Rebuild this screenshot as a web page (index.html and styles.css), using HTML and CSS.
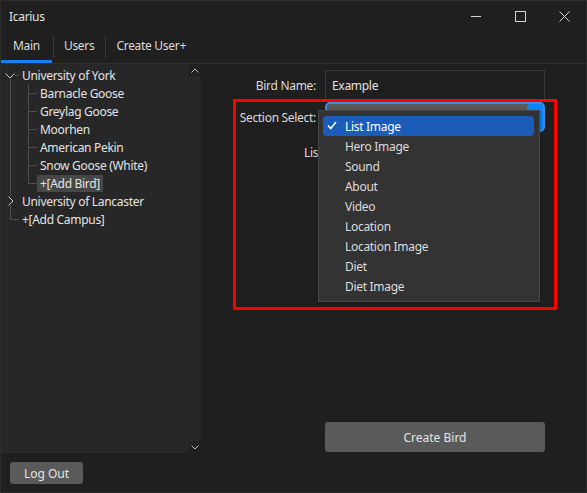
FILE: index.html
```html
<!DOCTYPE html>
<html lang="en">
<head>
<meta charset="utf-8">
<title>Icarius</title>
<link rel="stylesheet" href="styles.css">
</head>
<body>
<div class="window">
  <header class="titlebar">
    <span class="title">Icarius</span>
    <div class="controls">
      <span class="ctrl"><svg width="10" height="10" viewBox="0 0 10 10"><line x1="0" y1="4.5" x2="10" y2="4.5" stroke="#d6d6d6" stroke-width="1"/></svg></span>
      <span class="ctrl"><svg width="11" height="11" viewBox="0 0 11 11"><rect x="0.5" y="0.5" width="10" height="10" fill="none" stroke="#d6d6d6" stroke-width="1"/></svg></span>
      <span class="ctrl"><svg width="11" height="11" viewBox="0 0 11 11"><path d="M0.5 0.5 L10.5 10.5 M10.5 0.5 L0.5 10.5" stroke="#d6d6d6" stroke-width="1"/></svg></span>
    </div>
  </header>

  <nav class="tabs">
    <span class="tab active">Main</span>
    <span class="tab">Users</span>
    <span class="tab">Create User+</span>
  </nav>

  <main class="content">
    <section class="treepanel">
      <ul class="tree">
        <li class="row">
          <span class="cell twisty-open"><svg width="10" height="6" viewBox="0 0 10 6"><polyline points="0.5,0.5 5,5 9.5,0.5" fill="none" stroke="#cfcfcf" stroke-width="1"/></svg></span>
          <span class="label">University of York</span>
        </li>
        <li class="row"><span class="cell vline"></span><span class="cell tee"></span><span class="label">Barnacle Goose</span></li>
        <li class="row"><span class="cell vline"></span><span class="cell tee"></span><span class="label">Greylag Goose</span></li>
        <li class="row"><span class="cell vline"></span><span class="cell tee"></span><span class="label">Moorhen</span></li>
        <li class="row"><span class="cell vline"></span><span class="cell tee"></span><span class="label">American Pekin</span></li>
        <li class="row"><span class="cell vline"></span><span class="cell tee"></span><span class="label">Snow Goose (White)</span></li>
        <li class="row"><span class="cell vline"></span><span class="cell elbow"></span><span class="label selected">+[Add Bird]</span></li>
        <li class="row">
          <span class="cell vline twisty-closed"><svg width="6" height="10" viewBox="0 0 6 10"><polyline points="0.5,0.5 5,5 0.5,9.5" fill="none" stroke="#cfcfcf" stroke-width="1"/></svg></span>
          <span class="label">University of Lancaster</span>
        </li>
        <li class="row"><span class="cell elbow"></span><span class="label">+[Add Campus]</span></li>
      </ul>
      <div class="scrollbar">
        <span class="sbtn"><svg width="8" height="5" viewBox="0 0 8 5"><polyline points="0.5,4.5 4,1 7.5,4.5" fill="none" stroke="#bdbdbd" stroke-width="1"/></svg></span>
        <span class="strack"></span>
        <span class="sbtn"><svg width="8" height="5" viewBox="0 0 8 5"><polyline points="0.5,0.5 4,4 7.5,0.5" fill="none" stroke="#bdbdbd" stroke-width="1"/></svg></span>
      </div>
    </section>

    <section class="form">
      <div class="frow r1">
        <label class="flabel">Bird Name:</label>
        <div class="input">Example</div>
      </div>
      <div class="frow r2">
        <label class="flabel">Section Select:</label>
        <div class="combo">
          <span class="combo-btn"><svg width="8" height="5" viewBox="0 0 8 5"><polyline points="0.5,0.5 4,4 7.5,0.5" fill="none" stroke="#ffffff" stroke-width="1.2"/></svg></span>
        </div>
      </div>
      <div class="frow r3">
        <label class="flabel left">List Image:</label>
      </div>
      <button class="btn create">Create Bird</button>

      <div class="popup">
        <div class="item current"><svg class="check" width="10" height="9" viewBox="0 0 10 9"><polyline points="1,4.5 3.8,7.5 9,1" fill="none" stroke="#ffffff" stroke-width="1.6"/></svg>List Image</div>
        <div class="item">Hero Image</div>
        <div class="item">Sound</div>
        <div class="item">About</div>
        <div class="item">Video</div>
        <div class="item">Location</div>
        <div class="item">Location Image</div>
        <div class="item">Diet</div>
        <div class="item">Diet Image</div>
      </div>
      <div class="annotation"></div>
    </section>
  </main>

  <footer class="footer">
    <button class="btn logout">Log Out</button>
  </footer>
</div>
</body>
</html>
```

FILE: styles.css
```css
* { box-sizing: border-box; }

html, body {
  margin: 0;
  padding: 0;
  background: #1f1f1f;
}

body {
  font-family: "Noto Sans", "Open Sans", sans-serif;
  font-size: 12px;
  letter-spacing: -0.3px;
  color: #dedede;
}

.window {
  width: 587px;
  height: 493px;
  border: 1px solid #2c2c2c;
  display: flex;
  flex-direction: column;
  background: #1f1f1f;
  overflow: hidden;
}

/* title bar */
.titlebar {
  height: 31px;
  display: flex;
  align-items: center;
  flex: none;
}
.title {
  padding-left: 8px;
  color: #e2e2e2;
  flex: 1;
}
.controls {
  display: flex;
  height: 100%;
}
.ctrl {
  width: 44px;
  display: flex;
  align-items: center;
  justify-content: center;
}

/* tabs */
.tabs {
  height: 32px;
  display: flex;
  flex: none;
  border-bottom: 1px solid #2e2e2e;
}
.tab {
  display: flex;
  align-items: center;
  padding: 0 10px 1px 12px;
  color: #dcdcdc;
  border-bottom: 3px solid transparent;
}
.tab.active {
  padding-right: 12px;
}
.tab + .tab {
  border-left: 1px solid transparent;
  background: linear-gradient(#3a3a3a, #3a3a3a) no-repeat 0 4px / 1px 22px;
  padding-left: 11px;
}
.tab.active {
  border-bottom-color: #1282f3;
}

/* main content */
.content {
  flex: 1;
  display: flex;
  min-height: 0;
}

.treepanel {
  width: 200px;
  background: #272727;
  display: flex;
  flex: none;
}
.tree {
  list-style: none;
  margin: 0;
  padding: 2px 0 0;
  flex: 1;
}
.row {
  height: 18px;
  display: flex;
  align-items: center;
  color: #e4e4e4;
}
.cell {
  width: 18px;
  height: 18px;
  flex: none;
  display: flex;
  align-items: center;
  justify-content: center;
  --ln: #4e4e4e;
}
.vline {
  background: linear-gradient(var(--ln), var(--ln)) no-repeat 9px 0 / 1px 100%;
}
.tee {
  background:
    linear-gradient(var(--ln), var(--ln)) no-repeat 9px 0 / 1px 100%,
    linear-gradient(var(--ln), var(--ln)) no-repeat 9px 9px / 9px 1px;
}
.elbow {
  background:
    linear-gradient(var(--ln), var(--ln)) no-repeat 9px 0 / 1px 10px,
    linear-gradient(var(--ln), var(--ln)) no-repeat 9px 9px / 9px 1px;
}
.twisty-open {
  background:
    linear-gradient(var(--ln), var(--ln)) no-repeat 9px 13px / 1px 5px,
    linear-gradient(var(--ln), var(--ln)) no-repeat 14px 9px / 4px 1px;
  padding-top: 1px;
}
.twisty-closed {
  padding-left: 1px;
}
.twisty-closed svg { background: #272727; }
.label {
  padding: 0 3px;
  line-height: 17px;
  white-space: nowrap;
}
.label.selected {
  background: #474747;
}

.scrollbar {
  width: 12px;
  display: flex;
  flex-direction: column;
  flex: none;
}
.sbtn {
  height: 12px;
  background: #202020;
  display: flex;
  align-items: center;
  justify-content: center;
}
.strack { flex: 1; }

/* form */
.form {
  flex: 1;
  display: flex;
  flex-direction: column;
  padding: 6px 0 1px;
  position: relative;
}
.frow {
  display: flex;
  align-items: center;
  gap: 9px;
  height: 30px;
}
.r2 { margin-top: 2px; }
.r3 { margin-top: 5px; }
.flabel {
  width: 115px;
  text-align: right;
  color: #dcdcdc;
}
.flabel.left {
  text-align: left;
  padding-left: 103px;
  white-space: nowrap;
}
.input {
  width: 220px;
  height: 30px;
  border: 1px solid #3a3a3a;
  background: #1f1f1f;
  padding: 0 6px;
  display: flex;
  align-items: center;
  color: #e4e4e4;
}
.combo {
  width: 220px;
  height: 30px;
  border: 2px solid #3c8ee0;
  border-radius: 5px;
  background: #595959;
  display: flex;
  justify-content: flex-end;
}
.combo-btn {
  width: 16px;
  height: 100%;
  background: #0a84ff;
  border-radius: 3px;
  display: flex;
  justify-content: center;
  padding-top: 6px;
}

.btn {
  font: inherit;
  color: #e6e6e6;
  background: #5a5a5a;
  border: none;
  border-radius: 3px;
  padding: 0;
}
.create {
  margin: auto 0 0 124px;
  width: 220px;
  height: 30px;
}

/* dropdown popup */
.popup {
  position: absolute;
  left: 117px;
  top: 46px;
  width: 222px;
  height: 192px;
  background: #333333;
  border: 1px solid #474747;
  padding: 5px 5px 5px 4px;
  box-shadow: 0 1px 3px rgba(0,0,0,0.35);
  z-index: 2;
}
.item {
  height: 20px;
  display: flex;
  align-items: center;
  padding-left: 22px;
  color: #dcdcdc;
  border-radius: 4px;
  position: relative;
}
.item.current {
  background: #1a5cb8;
  color: #ffffff;
}
.check {
  position: absolute;
  left: 4px;
  top: 5px;
}

/* red annotation rectangle */
.annotation {
  position: absolute;
  left: 32px;
  top: 35px;
  width: 324px;
  height: 211px;
  border: 3px solid #ff0000;
  z-index: 3;
  pointer-events: none;
}

/* footer */
.footer {
  height: 39px;
  flex: none;
  display: flex;
  align-items: flex-start;
  padding: 9px 0 0 9px;
}
.logout {
  width: 73px;
  height: 22px;
}
```
